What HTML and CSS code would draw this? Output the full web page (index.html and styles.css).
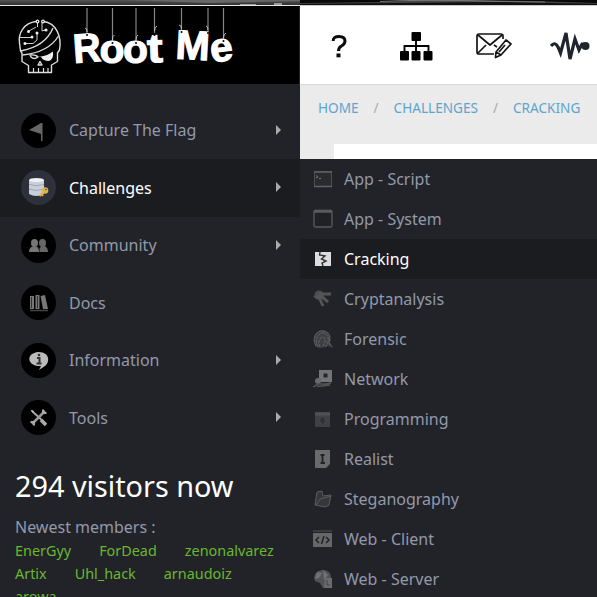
FILE: index.html
```html
<!DOCTYPE html>
<html lang="en">
<head>
<meta charset="utf-8">
<title>Root Me - Cracking</title>
<link rel="stylesheet" href="styles.css">
</head>
<body>
<div class="topstrip"><svg width="597" height="6" viewBox="0 0 597 6">
  <defs><linearGradient id="strip" x2="0" y2="1"><stop stop-color="#555"/><stop offset="1" stop-color="#303030"/></linearGradient></defs>
  <rect width="597" height="5" fill="url(#strip)"/>
  <path d="M125 0H300V1L210 3Z" fill="#686868"/><path d="M240 4H256V5H240ZM274 3H282V5H274Z" fill="#999"/>
  <path d="M300 0H430L385 2L300 3ZM465 0H597V3L530 1Z" fill="#080808"/><path d="M300 4L400 3L505 2L597 4V5H300Z" fill="#111"/>
  <path d="M380 1.5Q430 -1 500 1.5L545 2" fill="none" stroke="#777"/>
  <rect y="5" width="300" height="1" fill="#e4e8e6"/><rect x="300" y="5" width="297" height="1" fill="#ccc"/>
</svg></div>
<div class="page">
  <aside class="sidebar">
    <div class="logo"><svg width="300" height="78" viewBox="0 6 300 78">
      <g fill="none" stroke="#ddd" stroke-width="1.400" stroke-linejoin="round">
        <path d="M36 21.500C24 23 18 33 19.500 43L20.500 51L22 53V61.500L28.500 65.500V72.500H51.500V65L57.500 61.500V53L59.500 50C62 36 56 23 43.500 21.500"/>
        <path d="M20.500 51C37 48 48 40 53 28M22.500 55C42 53 53 45 58.500 36"/>
        <path d="M33.500 68V72M38.500 68V72M43.500 68V72M48 68V72" stroke-width="1.200"/>
        <path d="M30 55Q36 54.500 38 57Q34 60 31 57ZM40 61.500L38 65H42Z"/>
      </g>
      <g fill="none" stroke="#ccc" stroke-width="1">
        <path d="M37.500 23V27M42 22V31L45 30M36 27L29 31M20 37.500H31L32 36M25 43.500H33L37 40V33"/>
      </g>
      <g fill="#eee"><circle cx="37.500" cy="21.500" r="1.900"/><circle cx="43" cy="21.500" r="1.900"/><circle cx="46" cy="30" r="1.600"/><circle cx="32" cy="37" r="1.500"/><circle cx="25" cy="43.500" r="1.500"/><circle cx="28.500" cy="31.500" r="1.500"/><circle cx="37" cy="33" r="1.500"/></g>
      <g fill="#000"><circle cx="37.500" cy="21.500" r=".7"/><circle cx="43" cy="21.500" r=".7"/></g>
      <path d="M38 57Q47 56 53 51.500Q54 59 49 61Q43 61 41 57Z" fill="#eee"/>
      <g stroke="#858585" stroke-width="1.200"><path d="M87 8V34M112.500 8V42M136 8V42M154.500 8V33M181.500 8V30M208 8V32M223.500 8V40"/></g>
      <g class="logo-letters">
        <text transform="translate(74 63) rotate(-4) scale(.94 1)">R</text>
        <text transform="translate(99.500 63.200)">o</text><text transform="translate(123 63.200)">o</text>
        <text transform="translate(147.500 62.500) rotate(-2) scale(1.150 1)">t</text>
        <text transform="translate(175 58.500) rotate(3)">M</text>
        <text transform="translate(211.500 62.500) rotate(-7)">e</text>
      </g>
      <g fill="#000"><circle cx="87" cy="35" r="1"/><circle cx="112.500" cy="43" r="1"/><circle cx="136" cy="43" r="1"/><circle cx="154.500" cy="35" r="1"/><circle cx="181.500" cy="32" r="1"/><circle cx="208" cy="33" r="1"/><circle cx="223.500" cy="41" r="1"/></g>
      <g fill="none" stroke="#ccc" stroke-width=".9"><path d="M87 32Q87 28 85 28M112.500 40Q112 36 114.500 35M136 40Q136 36 138 35M154.500 31Q154.500 27 157 26M181.500 29Q181.500 25 179 25M208 30Q208 26 206 26M223.500 38Q223.500 34 226 33"/></g>
    </svg></div>
    <nav class="menu">
      <a class="item more"><span class="disc"><svg viewBox="0 0 35 35"><path d="M20 10L8 17L20 21V28H21.500V10Z" fill="#666"/></svg></span>Capture The Flag</a>
      <a class="item more active"><span class="disc"><svg viewBox="0 0 35 35"><path d="M8 10V24Q15 28 23 24V10Z" fill="#c9cfda"/><ellipse cx="15.500" cy="10" rx="7.500" ry="2" fill="#eef0f5"/><path d="M8 14.500Q15 17 23 14.500M8 19Q15 22 23 19" stroke="#9da4b1" fill="none"/><circle cx="24" cy="20.500" r="3.300" fill="#deb354"/><circle cx="25" cy="19.500" r=".8" fill="#58420f"/><path d="M22.500 22L18.500 26M20.500 24L22 26" stroke="#deb354" stroke-width="2"/></svg></span>Challenges</a>
      <a class="item more"><span class="disc"><svg viewBox="0 0 35 35" fill="#777"><ellipse cx="13.500" cy="15" rx="3.500" ry="4"/><path d="M8 24Q8 19 12 18.500H15Q18 19 18 24Z"/><ellipse cx="21.500" cy="15" rx="3.500" ry="4" fill="#666"/><path d="M18.500 24V20L21 18H24Q27 20 27 24Z" fill="#666"/></svg></span>Community</a>
      <a class="item"><span class="disc"><svg viewBox="0 0 35 35" fill="#777"><path d="M9 11H13V24H9ZM14.500 10H18.500V24H14.500ZM19.500 11L24 10L27 24H22Z"/><path d="M10.500 12V23M16.500 11V23" stroke="#333"/><path d="M9 25.500H27" stroke="#444" stroke-width="1.500"/></svg></span>Docs</a>
      <a class="item more"><span class="disc"><svg viewBox="0 0 35 35"><path d="M17.500 9C30 9 29 21 22.500 24L18 27L20 23C6 24 4 10 17.500 9Z" fill="#bbb"/><path d="M16 15H18.500V20M15.500 20.500H20.500" stroke="#333" stroke-width="2" fill="none"/><circle cx="18" cy="12" r="1.300" fill="#333"/></svg></span>Information</a>
      <a class="item more"><span class="disc"><svg viewBox="0 0 35 35"><path d="M11 11L25 24" stroke="#aaa" stroke-width="1.800"/><path d="M20 20L25 25" stroke="#aaa" stroke-width="3.500"/><path d="M11 24L24 11" stroke="#999" stroke-width="2.500"/><path d="M22 9.500V13H25.500M9.500 22H13V25.500" stroke="#aaa" stroke-width="2" fill="none"/><path d="M9.500 9.500L13 11L11.500 13Z" fill="#bbb"/></svg></span>Tools</a>
    </nav>
    <section class="visitors">
      <h2>294 visitors now</h2>
      <p>Newest members :</p>
      <div class="members"><a>EnerGyy</a><a>ForDead</a><a>zenonalvarez</a></div>
      <div class="members"><a>Artix</a><a>Uhl_hack</a><a>arnaudoiz</a></div>
      <div class="members"><a>arowa</a></div>
    </section>
  </aside>
  <main class="content">
    <header class="toolbar"><svg width="297" height="78" viewBox="300 6 297 78">
      <path d="M333.200 41Q333 36.500 339 36.500Q345 36.500 345 41Q345 44 341.500 46Q338.500 47.500 338.500 51" fill="none" stroke="#0b0b0b" stroke-width="3"/><rect x="336.500" y="53.500" width="4" height="3.800" fill="#0b0b0b"/>
      <g><rect x="411.500" y="32" width="9.500" height="9" rx="1"/><rect x="400" y="51" width="9" height="9.500" rx="1"/><rect x="411.500" y="51" width="9" height="9.500" rx="1"/><rect x="423.500" y="51" width="9" height="9.500" rx="1"/><path d="M404.500 52V46H428.500V52M416 40V52" fill="none" stroke="#000" stroke-width="1.900"/></g>
      <g fill="none" stroke="#151515" stroke-width="1.700" stroke-linejoin="round"><path d="M503 39V36Q503 34 501 34H479Q477 34 477 36V52Q477 54 479 54H494"/><path d="M478 35L490 45L502 35M478 53L486 45M494 45L497 47"/><path d="M496 52L506 40L511 44L501 55L495.500 57.500ZM496 52L501 55M499 52L505 45"/></g>
      <path d="M551 46Q555 41 558 47L560.500 53L566 33L570 59L575 39L579 50L582 44Q585 44 586 46" fill="none" stroke="#20252d" stroke-width="3.200"/><circle cx="585.500" cy="46" r="4" fill="#20252d"/>
    </svg></header>
    <div class="breadcrumb"><a>HOME</a><i>/</i><a>CHALLENGES</a><i>/</i><a>CRACKING</a></div>
    <div class="panel"></div>
    <nav class="submenu">
      <a><svg viewBox="0 0 20 20"><path d="M1.500 2.500H18.500V17.500H1.500Z" fill="#292b2e" stroke="#4d4e50"/><path d="M1 17.500H19M1 3H19" stroke="#606163" stroke-width="1.500"/><path d="M3 6.500L5 8L3 9M6 9.500H8" stroke="#777" fill="none"/></svg>App - Script</a>
      <a><svg viewBox="0 0 20 20"><rect x="1" y="1.500" width="18" height="16.500" rx="1.500" fill="#1f2124" stroke="#494b4e" stroke-width="1.800"/><path d="M1 2.500H19" stroke="#5c5d60" stroke-width="2.500"/></svg>App - System</a>
      <a class="active"><svg viewBox="0 0 20 20"><path d="M2 3H18V17H2Z" fill="#ddd"/><path d="M7 3L6.500 6L12 7L8.500 10L13 12L9 14L10 17" fill="none" stroke="#333" stroke-width="1.400"/></svg>Cracking</a>
      <a><svg viewBox="0 0 20 20"><circle cx="6" cy="6" r="4.500" fill="#4b4d50"/><path d="M6 5H18M7 6L15 13M5 6L10 17" stroke="#555" stroke-width="3"/><path d="M1 7L5 10" stroke="#555" stroke-width="2"/></svg>Cryptanalysis</a>
      <a><svg viewBox="0 0 20 20"><path d="M3 18Q-2 10 3 4Q9 -2 16 4Q19 9 17 13L20 19L15 17L8 19Z" fill="#3d3f42"/><g fill="none" stroke="#66676a" stroke-width="1" stroke-dasharray="3 1"><path d="M3 17Q-1 10 4 4Q9 0 15 4Q18 8 16 14L19 18M5 18Q1 10 7 5Q12 2 15 8Q16 15 12 18M7 18Q4 11 9 8Q13 8 12 13L10 17"/></g></svg>Forensic</a>
      <a><svg viewBox="0 0 20 20"><path d="M6 1H19V13H8L6 10Z" fill="#737476"/><rect x="10.500" y="4.500" width="4" height="4" fill="#25272a"/><circle cx="5" cy="12" r="3" fill="#686a6c"/><path d="M0 18L5 15H13L18 14M4 17.500L17 16" fill="none" stroke="#555" stroke-width="1.500"/></svg>Network</a>
      <a><svg viewBox="0 0 20 20"><path d="M2 3H17V18H2Z" fill="#3e4043"/><path d="M2 5H17" stroke="#505154" stroke-width="3"/><ellipse cx="9.500" cy="11.500" rx="3" ry="4" fill="#303235" stroke="#46484b"/></svg>Programming</a>
      <a><svg viewBox="0 0 20 20"><path d="M2 1H17V15L13 19H2Z" fill="#686a6c"/><path d="M9.500 5V14M7.500 14H12M7.500 6H11.500" stroke="#222428" stroke-width="1.900"/></svg>Realist</a>
      <a><svg viewBox="0 0 20 20"><path d="M2 16L4 3L9 2L10 7L18 6L16 16L12 18ZM3 16L7 10L18 7" fill="#35373a" stroke="#5b5c5f"/></svg>Steganography</a>
      <a><svg viewBox="0 0 20 20"><path d="M0 1H19V3H0Z" fill="#3a3b3d"/><path d="M0 4H19V18H0Z" fill="#666769"/><path d="M6 8L3 11L6 14M13 8L16 11L13 14M11 7L8.500 15" fill="none" stroke="#222428" stroke-width="1.500"/></svg>Web - Client</a>
      <a><svg viewBox="0 0 20 20"><path d="M1 8Q3 1 10 1Q17 1 18 8V19H10L7 14L2 12Z" fill="#515356"/><path d="M4 3L9 4L6 9L2 10M10 1L15 6L11 11" fill="#707173"/><path d="M12 9H19V19H11Z" fill="#6a6b6d"/><path d="M14 11V16H17" stroke="#444" fill="none"/></svg>Web - Server</a>
    </nav>
  </main>
</div>
</body>
</html>
```
FILE: styles.css
```css
* { box-sizing: border-box; }
body {
  margin: 0;
  width: 597px;
  height: 597px;
  overflow: hidden;
  background: #ebebeb;
  font: 16px/24px "Noto Sans", sans-serif;
  color: #9299ab;
}
svg { display: block; }
.topstrip { height: 6px; }
.page { display: flex; height: 591px; }
.sidebar { width: 300px; background: #222328; overflow: hidden; }
.logo { height: 78px; background: #000; }
.logo-letters {
  fill: #fff;
  stroke: #fff;
  stroke-width: 1.1px;
  font: bold 41px "Liberation Sans", sans-serif;
}
.menu { padding-top: 17.5px; }
.item {
  display: flex;
  align-items: center;
  height: 57.5px;
  padding: 0 17px 0 21px;
  gap: 13px;
}
.item.active, .submenu .active { background: #1b1c20; color: #fff; }
.disc { width: 35px; height: 35px; border-radius: 50%; background: #000; }
.active .disc { background: #2e303b; }
.more::after {
  content: "";
  margin: -1px 2px 0 auto;
  border: 5px solid transparent;
  border-left-color: #aaa;
  border-right: 0;
}
.visitors { padding: 19px 15px 0; }
.visitors h2 {
  margin: 0;
  font-size: 28.8px;
  line-height: 40px;
  font-weight: 400;
  color: #fff;
}
.visitors p { margin: 9px 0 0; line-height: 24px; }
.members {
  display: flex;
  gap: 28px;
  font-size: 14.4px;
  line-height: 23px;
  color: #68b82e;
}
.content { width: 297px; }
.toolbar { height: 78px; background: #fff; box-shadow: 0 1px 1px #d8d8d8; }
.breadcrumb {
  display: flex;
  height: 60px;
  padding: 12px 0 0 18px;
  font-size: 13.6px;
  color: #5da5cd;
}
.breadcrumb i { width: 35px; text-align: center; font-style: normal; color: #aaa; }
.panel { height: 15px; margin-left: 34px; background: #fff; }
.submenu { background: #222328; }
.submenu a {
  display: flex;
  align-items: center;
  height: 40px;
  padding-left: 13px;
  gap: 11px;
}
.submenu svg { width: 20px; height: 20px; }
```
